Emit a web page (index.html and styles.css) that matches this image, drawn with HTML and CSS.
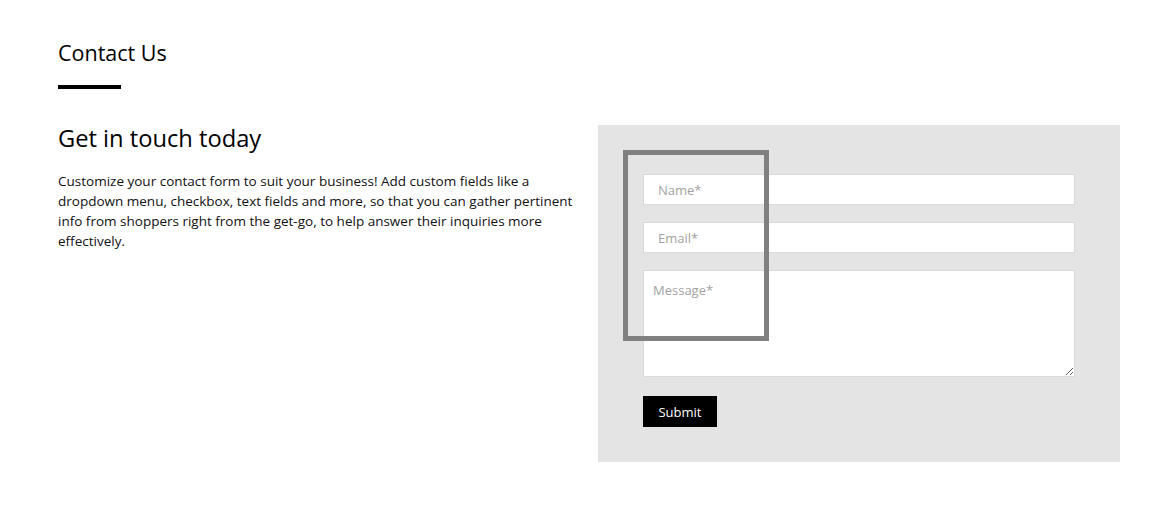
FILE: index.html
```html
<!DOCTYPE html>
<html lang="en">
<head>
<meta charset="utf-8">
<title>Contact Us</title>
<link rel="stylesheet" href="styles.css">
</head>
<body>
<main class="page">
  <header class="section-head">
    <h1 class="section-title">Contact Us</h1>
    <div class="title-bar"></div>
  </header>
  <div class="contact-row">
    <div class="contact-info">
      <h2 class="contact-heading">Get in touch today</h2>
      <p class="contact-text">Customize your contact form to suit your business! Add custom fields like a dropdown menu, checkbox, text fields and more, so that you can gather pertinent info from shoppers right from the get-go, to help answer their inquiries more effectively.</p>
    </div>
    <form class="contact-form" onsubmit="return false;">
      <input class="field" type="text" placeholder="Name*">
      <input class="field" type="email" placeholder="Email*">
      <textarea class="field field-area" placeholder="Message*"></textarea>
      <button class="submit-btn" type="submit">Submit</button>
      <div class="highlight-box"></div>
    </form>
  </div>
</main>
</body>
</html>
```

FILE: styles.css
```css
* {
  box-sizing: border-box;
}

html, body {
  margin: 0;
  padding: 0;
  background: #ffffff;
}

body {
  font-family: "Open Sans", "Liberation Sans", sans-serif;
  color: #000000;
}

.page {
  padding: 0 53px 0 58px;
}

.section-head {
  padding-top: 39px;
}

.section-title {
  margin: 0;
  font-size: 21.5px;
  font-weight: 400;
  line-height: 28px;
}

.title-bar {
  width: 63px;
  height: 4px;
  background: #000000;
  margin-top: 18px;
}

.contact-row {
  display: grid;
  grid-template-columns: 522px 522px;
  column-gap: 18px;
  margin-top: 36px;
  align-items: start;
}

.contact-heading {
  margin: 1px 0 0;
  font-size: 23.7px;
  font-weight: 400;
  line-height: 24px;
}

.contact-text {
  margin: 21px 0 0;
  font-size: 13.5px;
  line-height: 20px;
  color: #111111;
}

.contact-form {
  position: relative;
  background: #e4e4e4;
  padding: 49px 45px 35px;
  display: flex;
  flex-direction: column;
  align-items: flex-start;
}

.field {
  display: block;
  width: 100%;
  height: 31px;
  margin: 0 0 17px;
  border: 1px solid #dadada;
  background: #ffffff;
  font-family: "Open Sans", "Liberation Sans", sans-serif;
  font-size: 13px;
  color: #333333;
  padding: 0 14px;
  outline: none;
  border-radius: 0;
}

.field::placeholder {
  color: #a2a2a2;
  opacity: 1;
}

.field-area {
  height: 107px;
  padding: 9px;
  line-height: 20px;
  resize: vertical;
  margin-bottom: 19px;
}

.submit-btn {
  height: 31px;
  width: 74px;
  padding: 0;
  border: none;
  border-radius: 0;
  background: #000000;
  color: #ffffff;
  font-family: "Open Sans", "Liberation Sans", sans-serif;
  font-size: 13px;
  cursor: pointer;
}

.highlight-box {
  position: absolute;
  left: 25px;
  top: 25px;
  width: 146px;
  height: 191px;
  border: 5px solid #808080;
  pointer-events: none;
}
```
